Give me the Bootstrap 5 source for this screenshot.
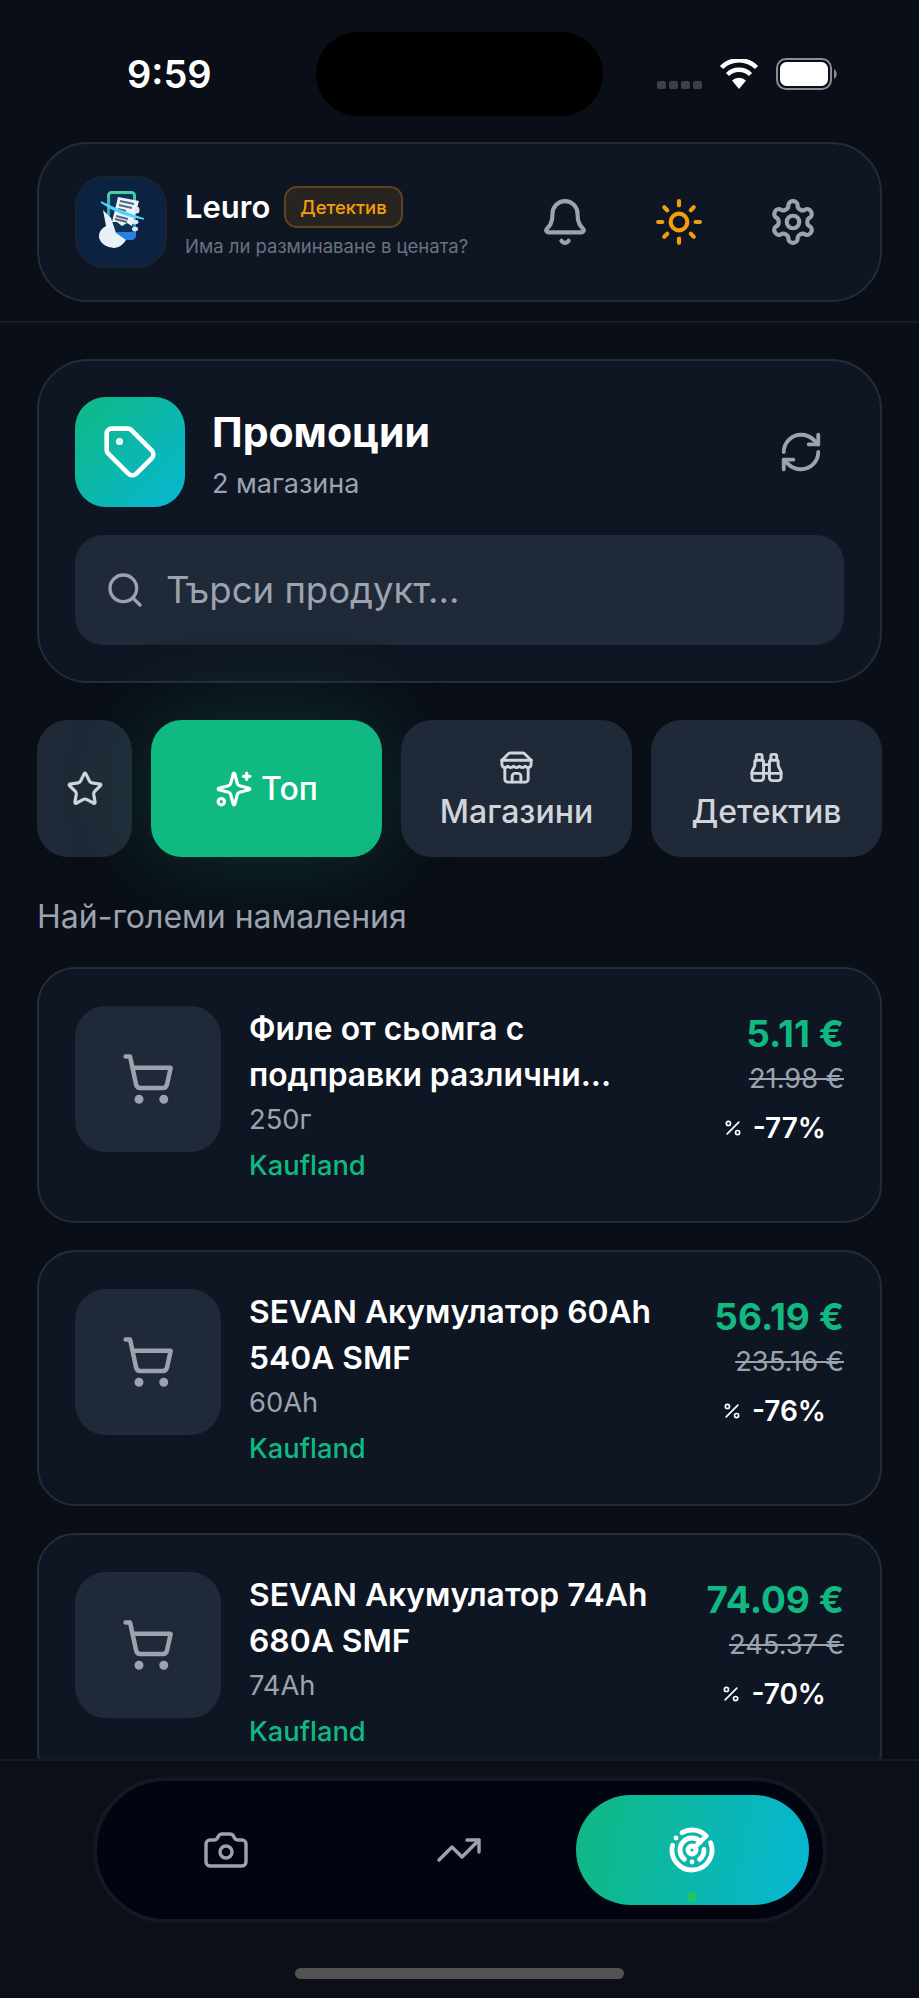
<!DOCTYPE html>
<html lang="bg">

<head>
    <meta charset="UTF-8">
    <meta name="viewport" content="width=device-width, initial-scale=1.0">
    <title>Leuro - Промоции</title>
    <link href="https://cdn.jsdelivr.net/npm/bootstrap@5.3.0/dist/css/bootstrap.min.css" rel="stylesheet">
    <style>
        html, body {
            height: 100%;
        }

        body {
            background-color: #0a0e17;
            color: #fff;
            font-family: Inter, "Noto Sans", sans-serif;
            overflow: hidden;
        }

        svg.ico {
            fill: none;
            stroke: currentColor;
            stroke-width: 2;
            stroke-linecap: round;
            stroke-linejoin: round;
            flex-shrink: 0;
        }

        /* status bar */
        .status-row {
            height: 142px;
            padding-top: 32px;
        }

        .status-time {
            width: 316px;
            height: 84px;
            padding-left: 127px;
            font-size: 38px;
            font-weight: 600;
            line-height: 84px;
        }

        .status-island {
            width: 287px;
            height: 84px;
            background: #000;
            border-radius: 42px;
        }

        .status-icons {
            height: 84px;
            padding-right: 81px;
            gap: 17px;
        }

        .sig-dots {
            gap: 3px;
            margin-top: 22px;
        }

        .sig-dots i {
            width: 9px;
            height: 8px;
            border-radius: 2px;
            background: #3a3f4a;
        }

        /* shared cards */
        .panel {
            background: #0f1623;
            border: 2px solid #262b38;
            color: #fff;
        }

        .top-wrap {
            padding: 0 37px 19px;
            border-bottom: 2px solid #161b26;
        }

        .top-panel {
            height: 160px;
            border-radius: 51px;
            padding: 0 36px;
        }

        .app-logo {
            width: 92px;
            height: 92px;
            border-radius: 30px;
            background: #0b2341;
            border: 2px solid #1a2332;
            margin-right: 18px;
        }

        .brand-name {
            font-size: 31px;
            font-weight: 600;
            line-height: 38px;
        }

        .role-tag {
            font-size: 18.4px;
            font-weight: 500;
            line-height: 38px;
            padding: 0 14px;
            color: #f59e0b;
            background: #29241f;
            border: 2px solid #5c4420;
            border-radius: 13px;
            margin-left: 14px;
        }

        .brand-sub {
            font-size: 18.5px;
            color: #6b7280;
            line-height: 24px;
            margin-top: 6px;
        }

        .top-actions {
            color: #9ca3af;
            gap: 64px;
            margin-right: 26px;
        }

        .main-wrap {
            padding: 36px 37px 0;
            min-height: 0;
            overflow: hidden;
        }

        .promo-panel {
            height: 324px;
            border-radius: 51px;
            padding: 36px 36px 0;
        }

        .promo-icon {
            width: 110px;
            height: 110px;
            border-radius: 31px;
            background: linear-gradient(135deg, #10b981, #06b6d4);
            margin-right: 27px;
        }

        .promo-title {
            font-size: 41px;
            font-weight: 700;
            line-height: 48px;
            margin: 4px 0 0;
        }

        .promo-sub {
            font-size: 27px;
            color: #9ca3af;
            line-height: 32px;
            margin-top: 12px;
        }

        .refresh-btn {
            color: #9ca3af;
            margin-right: 20px;
        }

        .search-box {
            height: 110px;
            margin-top: 28px;
            border-radius: 28px;
            background: #1f2937;
            padding: 0 30px;
            gap: 21px;
            color: #9ca3af;
            font-size: 36.5px;
        }

        .tabs-row {
            gap: 19px;
            margin-top: 37px;
            height: 137px;
        }

        .tab-btn {
            flex: 0 0 231px;
            height: 137px;
            padding: 0;
            border: 0;
            border-radius: 31px;
            background: #1f2937;
            color: #d1d5db;
            font-size: 32px;
            font-weight: 500;
            line-height: 40px;
        }

        .tab-btn.tab-stack {
            padding-top: 4px;
            gap: 7px;
        }

        .tab-btn.tab-star {
            flex-basis: 95px;
        }

        .tab-btn.tab-on {
            background: #10b981;
            color: #fff;
            box-shadow: 0 0 90px rgba(16, 185, 129, .22);
        }

        .section-label {
            font-size: 32px;
            color: #9ca3af;
            line-height: 38px;
            margin: 41px 0 31px;
        }

        .offer-card {
            height: 256px;
            border-radius: 38px;
            padding: 37px 36px 0;
            margin-bottom: 27px;
            flex-shrink: 0;
        }

        .offer-thumb {
            width: 146px;
            height: 146px;
            border-radius: 31px;
            background: #1f2937;
            color: #9ca3af;
            margin-right: 28px;
        }

        .offer-name {
            font-size: 31.8px;
            font-weight: 600;
            line-height: 46px;
        }

        .offer-size {
            font-size: 27.3px;
            color: #9ca3af;
            line-height: 44px;
        }

        .offer-shop {
            font-size: 27.3px;
            color: #10b981;
            font-weight: 500;
            line-height: 48px;
        }

        .offer-price {
            font-size: 37px;
            font-weight: 700;
            color: #10b981;
            line-height: 48px;
            margin-top: 4px;
        }

        .offer-old {
            font-size: 27.3px;
            color: #9ca3af;
            text-decoration: line-through;
            line-height: 34px;
            margin-top: 4px;
        }

        .offer-cut {
            font-size: 28px;
            font-weight: 600;
            line-height: 40px;
            margin-top: 12px;
            padding-right: 18px;
            gap: 10px;
        }

        /* bottom nav */
        .bottom-bar {
            height: 239px;
            background: #0b0f18;
            border-top: 2px solid #161b26;
            padding-top: 16px;
            flex-shrink: 0;
        }

        .nav-pill {
            width: 734px;
            height: 146px;
            margin: 0 auto;
            border-radius: 73px;
            background: #02050f;
            border: 4px solid #141824;
            padding: 0 13px;
        }

        .nav-slot {
            flex: 0 0 233px;
            height: 110px;
            color: #9ca3af;
        }

        .nav-slot svg.ico {
            stroke-width: 1.7;
        }

        .nav-slot.nav-on {
            border-radius: 55px;
            background: linear-gradient(100deg, #10b981, #06b6d4);
            color: #fff;
        }

        .nav-slot.nav-on svg.ico {
            stroke-width: 2.4;
        }

        .nav-dot {
            position: absolute;
            left: 50%;
            bottom: 3px;
            width: 10px;
            height: 10px;
            margin-left: -5px;
            border-radius: 50%;
            background: #22c55e;
        }

        .home-line {
            width: 329px;
            height: 11px;
            margin: 45px auto 0;
            border-radius: 6px;
            background: #525252;
        }
    </style>
</head>

<body>
    <div class="d-flex flex-column h-100">
        <!-- Status bar -->
        <div class="status-row d-flex align-items-start flex-shrink-0">
            <div class="status-time">9:59</div>
            <div class="status-island"></div>
            <div class="status-icons ms-auto d-flex align-items-center">
                <div class="sig-dots d-flex"><i></i><i></i><i></i><i></i></div>
                <svg width="40" height="30" viewBox="0 0 40 30">
                    <path d="M20 30 13 21.5a10 10 0 0 1 14 0z" fill="#fff"/>
                    <path d="M8.5 15.5a16.5 16.5 0 0 1 23 0" fill="none" stroke="#fff" stroke-width="4.5"/>
                    <path d="M2.5 8.5a25 25 0 0 1 35 0" fill="none" stroke="#fff" stroke-width="4.5"/>
                </svg>
                <svg width="62" height="32" viewBox="0 0 62 32">
                    <rect x="1" y="1" width="54" height="30" rx="9" fill="none" stroke="#8a8d94" stroke-width="2"/>
                    <rect x="4" y="4" width="48" height="24" rx="6.5" fill="#fff"/>
                    <path d="M58 11a6 6 0 0 1 0 10z" fill="#8a8d94"/>
                </svg>
            </div>
        </div>

        <!-- Header -->
        <div class="top-wrap flex-shrink-0">
            <div class="top-panel panel d-flex flex-row align-items-center">
                <div class="app-logo d-flex align-items-center justify-content-center flex-shrink-0">
                    <svg width="64" height="72" viewBox="0 0 64 72">
                        <defs>
                            <linearGradient id="phoneEdge" x1="0" y1="0" x2="0" y2="1">
                                <stop offset="0" stop-color="#45d0a0"/>
                                <stop offset=".55" stop-color="#2f9fc8"/>
                                <stop offset="1" stop-color="#2b7fe0"/>
                            </linearGradient>
                        </defs>
                        <rect x="19.5" y="6.5" width="26" height="46" rx="3" fill="#0e3358" stroke="url(#phoneEdge)" stroke-width="3"/>
                        <path d="M19 46h27v3a3 3 0 0 1-3 3H22a3 3 0 0 1-3-3z" fill="#2b7fe0"/>
                        <path d="M29 11 50 15 43 40 38 37 33 40 28 36 23 36z" fill="#eef3f7"/>
                        <path d="M31 15 45 18M30 19 43 22M29 23 37 25M27 30 39 33M26 33 38 36" stroke="#51697f" stroke-width="2"/>
                        <path d="M12 16Q30 29 55 33Q30 25 12 16z" fill="#4fd4ff" stroke="#4fd4ff" stroke-width="1.6"/>
                        <path d="M14 24 17 40Q9 44 10 52Q13 61 25 62Q33 61 37 54L27 47 22 32z" fill="#e8f1f8"/>
                        <ellipse cx="48" cy="24" rx="2.5" ry="3.5" fill="#dce8f2"/>
                        <ellipse cx="46" cy="36" rx="3.5" ry="2.2" fill="#dce8f2"/>
                        <ellipse cx="46" cy="43" rx="3" ry="2.2" fill="#dce8f2"/>
                    </svg>
                </div>
                <div class="flex-grow-1">
                    <div class="d-flex align-items-center">
                        <span class="brand-name">Leuro</span>
                        <span class="role-tag">Детектив</span>
                    </div>
                    <div class="brand-sub">Има ли разминаване в цената?</div>
                </div>
                <div class="top-actions d-flex align-items-center">
                    <svg class="ico" width="50" height="50" viewBox="0 0 24 24"><path d="M10.268 21a2 2 0 0 0 3.464 0"/><path d="M3.262 15.326A1 1 0 0 0 4 17h16a1 1 0 0 0 .74-1.673C19.41 13.956 18 12.499 18 8A6 6 0 0 0 6 8c0 4.499-1.411 5.956-2.738 7.326"/></svg>
                    <svg class="ico" width="50" height="50" viewBox="0 0 24 24" style="color:#f59e0b"><circle cx="12" cy="12" r="4"/><path d="M12 2v2"/><path d="M12 20v2"/><path d="m4.93 4.93 1.41 1.41"/><path d="m17.66 17.66 1.41 1.41"/><path d="M2 12h2"/><path d="M20 12h2"/><path d="m6.34 17.66-1.41 1.41"/><path d="m19.07 4.93-1.41 1.41"/></svg>
                    <svg class="ico" width="50" height="50" viewBox="0 0 24 24"><path d="M12.22 2h-.44a2 2 0 0 0-2 2v.18a2 2 0 0 1-1 1.73l-.43.25a2 2 0 0 1-2 0l-.15-.08a2 2 0 0 0-2.73.73l-.22.38a2 2 0 0 0 .73 2.73l.15.1a2 2 0 0 1 1 1.72v.51a2 2 0 0 1-1 1.74l-.15.09a2 2 0 0 0-.73 2.73l.22.38a2 2 0 0 0 2.73.73l.15-.08a2 2 0 0 1 2 0l.43.25a2 2 0 0 1 1 1.73V20a2 2 0 0 0 2 2h.44a2 2 0 0 0 2-2v-.18a2 2 0 0 1 1-1.73l.43-.25a2 2 0 0 1 2 0l.15.08a2 2 0 0 0 2.73-.73l.22-.39a2 2 0 0 0-.73-2.73l-.15-.08a2 2 0 0 1-1-1.74v-.5a2 2 0 0 1 1-1.74l.15-.09a2 2 0 0 0 .73-2.73l-.22-.38a2 2 0 0 0-2.73-.73l-.15.08a2 2 0 0 1-2 0l-.43-.25a2 2 0 0 1-1-1.73V4a2 2 0 0 0-2-2z"/><circle cx="12" cy="12" r="3"/></svg>
                </div>
            </div>
        </div>

        <!-- Main content -->
        <div class="main-wrap flex-grow-1 d-flex flex-column">
            <div class="promo-panel panel flex-shrink-0">
                <div class="d-flex align-items-center">
                    <div class="promo-icon d-flex align-items-center justify-content-center flex-shrink-0">
                        <svg class="ico" width="56" height="56" viewBox="0 0 24 24"><path d="M12.586 2.586A2 2 0 0 0 11.172 2H4a2 2 0 0 0-2 2v7.172a2 2 0 0 0 .586 1.414l8.704 8.704a2.426 2.426 0 0 0 3.42 0l6.58-6.58a2.426 2.426 0 0 0 0-3.42z"/><circle cx="7.5" cy="7.5" r=".5" fill="currentColor"/></svg>
                    </div>
                    <div class="flex-grow-1">
                        <h1 class="promo-title">Промоции</h1>
                        <div class="promo-sub">2 магазина</div>
                    </div>
                    <div class="refresh-btn">
                        <svg class="ico d-block" width="46" height="46" viewBox="0 0 24 24"><path d="M3 12a9 9 0 0 1 9-9 9.75 9.75 0 0 1 6.74 2.74L21 8"/><path d="M21 3v5h-5"/><path d="M21 12a9 9 0 0 1-9 9 9.75 9.75 0 0 1-6.74-2.74L3 16"/><path d="M8 16H3v5"/></svg>
                    </div>
                </div>
                <div class="search-box d-flex align-items-center">
                    <svg class="ico" width="40" height="40" viewBox="0 0 24 24"><circle cx="11" cy="11" r="8"/><path d="m21 21-4.3-4.3"/></svg>
                    <span>Търси продукт...</span>
                </div>
            </div>

            <div class="tabs-row d-flex flex-shrink-0">
                <button class="btn tab-btn tab-star d-flex align-items-center justify-content-center" type="button">
                    <svg class="ico" width="38" height="38" viewBox="0 0 24 24"><path d="M11.525 2.295a.53.53 0 0 1 .95 0l2.31 4.679a2.123 2.123 0 0 0 1.595 1.16l5.166.756a.53.53 0 0 1 .294.904l-3.736 3.638a2.123 2.123 0 0 0-.611 1.878l.882 5.14a.53.53 0 0 1-.771.56l-4.618-2.428a2.122 2.122 0 0 0-1.973 0L6.396 21.01a.53.53 0 0 1-.77-.56l.881-5.139a2.122 2.122 0 0 0-.611-1.879L2.16 9.795a.53.53 0 0 1 .294-.906l5.165-.755a2.122 2.122 0 0 0 1.597-1.16z"/></svg>
                </button>
                <button class="btn tab-btn tab-on d-flex align-items-center justify-content-center gap-2" type="button">
                    <svg class="ico" width="38" height="38" viewBox="0 0 24 24"><path d="M9.937 15.5A2 2 0 0 0 8.5 14.063l-6.135-1.582a.5.5 0 0 1 0-.962L8.5 9.936A2 2 0 0 0 9.937 8.5l1.582-6.135a.5.5 0 0 1 .963 0L14.063 8.5A2 2 0 0 0 15.5 9.937l6.135 1.581a.5.5 0 0 1 0 .964L15.5 14.063a2 2 0 0 0-1.437 1.437l-1.582 6.135a.5.5 0 0 1-.963 0z"/><path d="M20 2v4"/><path d="M22 4h-4"/><circle cx="4" cy="20" r="2"/></svg>
                    <span>Топ</span>
                </button>
                <button class="btn tab-btn tab-stack d-flex flex-column align-items-center justify-content-center" type="button">
                    <svg class="ico" width="35" height="35" viewBox="0 0 24 24"><path d="m2 7 4.41-4.41A2 2 0 0 1 7.83 2h8.34a2 2 0 0 1 1.42.59L22 7"/><path d="M4 12v8a2 2 0 0 0 2 2h12a2 2 0 0 0 2-2v-8"/><path d="M15 22v-4a2 2 0 0 0-2-2h-2a2 2 0 0 0-2 2v4"/><path d="M2 7h20"/><path d="M22 7v3a2 2 0 0 1-2 2a2.7 2.7 0 0 1-1.59-.63.7.7 0 0 0-.82 0A2.7 2.7 0 0 1 16 12a2.7 2.7 0 0 1-1.59-.63.7.7 0 0 0-.82 0A2.7 2.7 0 0 1 12 12a2.7 2.7 0 0 1-1.59-.63.7.7 0 0 0-.82 0A2.7 2.7 0 0 1 8 12a2.7 2.7 0 0 1-1.59-.63.7.7 0 0 0-.82 0A2.7 2.7 0 0 1 4 12a2 2 0 0 1-2-2V7"/></svg>
                    <span>Магазини</span>
                </button>
                <button class="btn tab-btn tab-stack d-flex flex-column align-items-center justify-content-center" type="button">
                    <svg class="ico" width="35" height="35" viewBox="0 0 24 24"><path d="M10 10h4"/><path d="M19 7V4a1 1 0 0 0-1-1h-2a1 1 0 0 0-1 1v3"/><path d="M20 21a2 2 0 0 0 2-2v-3.851c0-1.39-2-2.962-2-4.829V8a1 1 0 0 0-1-1h-4a1 1 0 0 0-1 1v11a2 2 0 0 0 2 2z"/><path d="M22 16H2"/><path d="M4 21a2 2 0 0 1-2-2v-3.851c0-1.39 2-2.962 2-4.829V8a1 1 0 0 1 1-1h4a1 1 0 0 1 1 1v11a2 2 0 0 1-2 2z"/><path d="M9 7V4a1 1 0 0 0-1-1H6a1 1 0 0 0-1 1v3"/></svg>
                    <span>Детектив</span>
                </button>
            </div>

            <div class="section-label flex-shrink-0">Най-големи намаления</div>

            <div id="offerList"></div>
        </div>

        <!-- Bottom nav -->
        <div class="bottom-bar">
            <div class="nav-pill d-flex align-items-center">
                <div class="nav-slot d-flex align-items-center justify-content-center">
                    <svg class="ico" width="48" height="48" viewBox="0 0 24 24"><path d="M13.997 4a2 2 0 0 1 1.76 1.05l.486.9A2 2 0 0 0 18.003 7H20a2 2 0 0 1 2 2v9a2 2 0 0 1-2 2H4a2 2 0 0 1-2-2V9a2 2 0 0 1 2-2h1.997a2 2 0 0 0 1.759-1.048l.489-.904A2 2 0 0 1 10.004 4z"/><circle cx="12" cy="13" r="3"/></svg>
                </div>
                <div class="nav-slot d-flex align-items-center justify-content-center">
                    <svg class="ico" width="48" height="48" viewBox="0 0 24 24"><path d="M16 7h6v6"/><path d="m22 7-8.5 8.5-5-5L2 17"/></svg>
                </div>
                <div class="nav-slot nav-on position-relative d-flex align-items-center justify-content-center">
                    <svg class="ico" width="48" height="48" viewBox="0 0 24 24"><path d="M19.07 4.93A10 10 0 0 0 6.99 3.34"/><path d="M4 6h.01"/><path d="M2.29 9.62A10 10 0 1 0 21.31 8.35"/><path d="M16.24 7.76A6 6 0 1 0 8.23 16.67"/><path d="M12 18h.01"/><path d="M17.99 11.66A6 6 0 0 1 15.77 16.67"/><circle cx="12" cy="12" r="2"/><path d="m13.41 10.59 5.66-5.66"/></svg>
                    <span class="nav-dot"></span>
                </div>
            </div>
            <div class="home-line"></div>
        </div>
    </div>

    <script src="https://cdn.jsdelivr.net/npm/bootstrap@5.3.0/dist/js/bootstrap.bundle.min.js"></script>
    <script>
        // Offers shown in the list
        const offers = [
            { name: "Филе от сьомга с<br>подправки различни...", size: "250г", shop: "Kaufland", price: "5.11 €", old: "21.98 €", cut: "-77%" },
            { name: "SEVAN Акумулатор 60Ah<br>540A SMF", size: "60Ah", shop: "Kaufland", price: "56.19 €", old: "235.16 €", cut: "-76%" },
            { name: "SEVAN Акумулатор 74Ah<br>680A SMF", size: "74Ah", shop: "Kaufland", price: "74.09 €", old: "245.37 €", cut: "-70%" }
        ];

        const list = document.getElementById("offerList");
        offers.forEach(item => {
            list.innerHTML += `
                <div class="offer-card panel d-flex flex-row align-items-start">
                    <div class="offer-thumb d-flex align-items-center justify-content-center flex-shrink-0">
                        <svg class="ico" width="54" height="54" viewBox="0 0 24 24"><circle cx="8" cy="21" r="1"/><circle cx="19" cy="21" r="1"/><path d="M2.05 2.05h2l2.66 12.42a2 2 0 0 0 2 1.58h9.78a2 2 0 0 0 1.95-1.57l1.65-7.43H5.12"/></svg>
                    </div>
                    <div class="flex-grow-1">
                        <div class="offer-name">${item.name}</div>
                        <div class="offer-size">${item.size}</div>
                        <div class="offer-shop">${item.shop}</div>
                    </div>
                    <div class="text-end flex-shrink-0">
                        <div class="offer-price">${item.price}</div>
                        <div class="offer-old">${item.old}</div>
                        <div class="offer-cut d-flex align-items-center justify-content-end">
                            <svg class="ico" width="20" height="20" viewBox="0 0 24 24"><path d="M19 5 5 19"/><circle cx="6.5" cy="6.5" r="2.5"/><circle cx="17.5" cy="17.5" r="2.5"/></svg>
                            <span>${item.cut}</span>
                        </div>
                    </div>
                </div>`;
        });
    </script>
</body>

</html>
